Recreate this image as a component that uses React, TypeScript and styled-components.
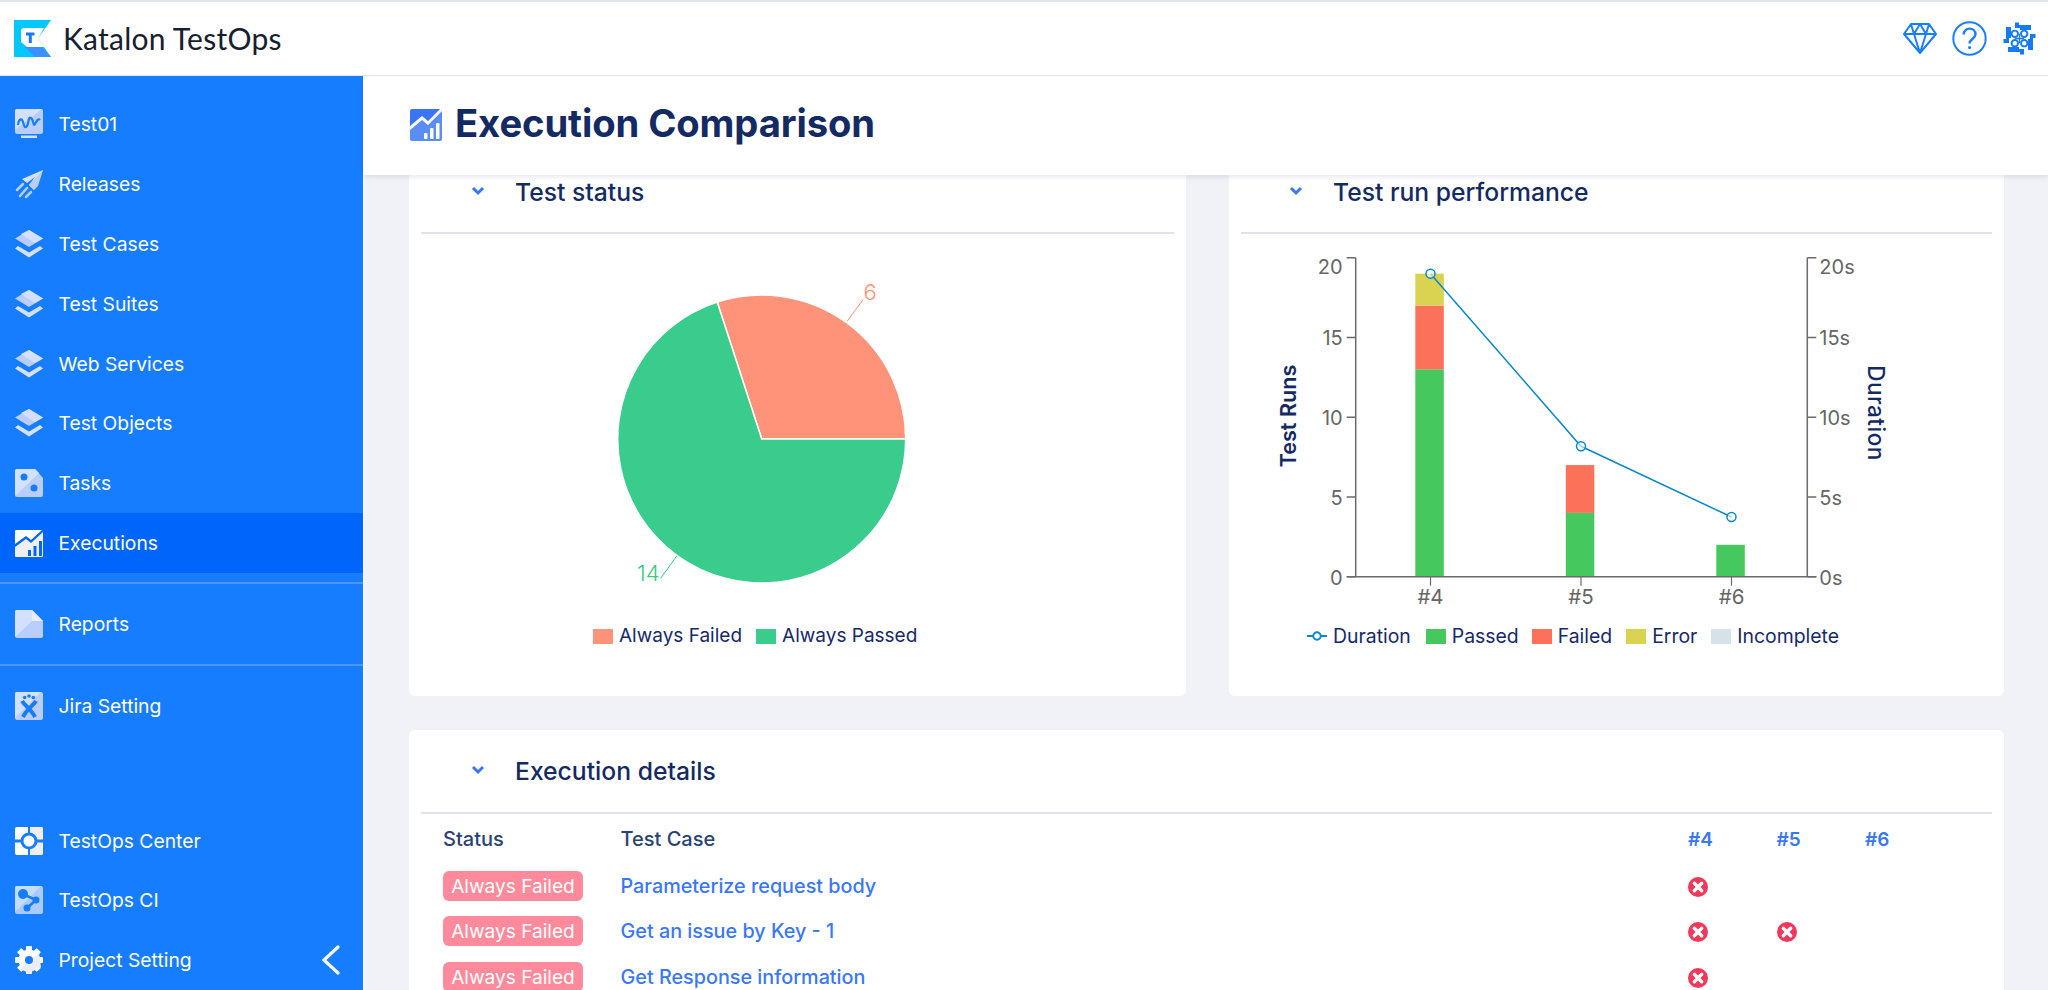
import React from "react";
import styled, { createGlobalStyle } from "styled-components";

const Global = createGlobalStyle`
  html, body, #root { margin: 0; height: 100%; }
  body { font-family: Inter, "Liberation Sans", sans-serif; overflow: hidden; background: #f0f2f7; }
  * { box-sizing: border-box; }
`;

const Page = styled.div`display: flex; flex-direction: column; height: 990px; overflow: hidden;`;
const TopBar = styled.header`
  height: 76px; flex: none; display: flex; align-items: center; justify-content: space-between;
  background: #fff; border-top: 2px solid #e1e4e8; border-bottom: 1px solid #e9e9e9; padding: 0 11px 0 14px;
`;
const Brand = styled.div`display: flex; align-items: center; gap: 12px;`;
const BrandName = styled.span`font-family: Lato, sans-serif; font-size: 30px; color: #17202e; letter-spacing: 0.25px; padding-bottom: 2px;`;
const TopIcons = styled.div`display: flex; align-items: center; gap: 15px;`;
const Body = styled.div`flex: 1; min-height: 0; display: flex;`;
const Sidebar = styled.nav`
  width: 364px; flex: none; display: flex; flex-direction: column; background: #177dff;
  border-right: 1px solid #fff; padding-top: 18.5px;
`;
const NavItem = styled.div<{ $active?: boolean }>`
  height: 59.8px; flex: none; display: flex; align-items: center; gap: 15.5px; padding-left: 15px;
  color: #fff; font-size: 19.3px; background: ${(p) => (p.$active ? "#0066fb" : "transparent")};
`;
const NavRule = styled.div`height: 2px; flex: none; margin: 9.5px 0 10px; background: #4f93ff;`;
const NavBottom = styled.div`margin-top: auto; display: flex; flex-direction: column;`;
const Collapse = styled.svg`margin-left: auto; margin-right: 22px;`;
const Main = styled.main`flex: 1; min-width: 0; display: flex; flex-direction: column;`;
const TitleBar = styled.div`
  height: 99px; flex: none; display: flex; align-items: center; gap: 13px; padding: 0 0 2px 46px; background: #fff;
  box-shadow: 0 2px 5px rgba(30, 40, 70, 0.1); position: relative; z-index: 2;
`;
const PageTitle = styled.h1`margin: 0 0 3px; font-size: 38.2px; font-weight: 700; color: #132a63; letter-spacing: -0.1px;`;
const Content = styled.div`flex: 1; min-height: 0; overflow: hidden; padding: 0 44px 0 45px; display: flex; flex-direction: column; gap: 34px;`;
const ChartRow = styled.div`display: grid; grid-template-columns: 777px 775px; gap: 43px; flex: none;`;
const Card = styled.section<{ $clipped?: boolean }>`
  background: #fff; padding: 0 12px; border-radius: ${(p) => (p.$clipped ? "0 0 6px 6px" : "6px")};
`;
const CardHead = styled.div<{ $h: number; $pb?: number; $left: number }>`
  height: ${(p) => p.$h}px; display: flex; align-items: center; gap: 30px; padding-left: ${(p) => p.$left}px;
  padding-bottom: ${(p) => p.$pb ?? 0}px; border-bottom: 2px solid #dde2ec;
`;
const CardTitle = styled.h2`margin: 0; font-size: 24.7px; font-weight: 500; color: #142a62;`;
const ChevronMark = styled.svg`flex: none; margin-bottom: 2px;`;
const ChartBody = styled.div`height: 462px;`;
const ChartSvg = styled.svg`display: block;`;
const Legend = styled.div<{ $left: number; $size: number }>`
  margin-left: ${(p) => p.$left}px; display: flex; align-items: center; font-size: ${(p) => p.$size}px; color: #15296a; line-height: 24px; white-space: nowrap;
`;
const LegendItem = styled.span<{ $gap: number }>`display: flex; align-items: center; gap: 6px; margin-right: ${(p) => p.$gap}px;`;
const Swatch = styled.i<{ $c: string }>`display: block; width: 20px; height: 15px; background: ${(p) => p.$c};`;
const Table = styled.div`padding: 11.5px 0 0 22px;`;
const Row = styled.div<{ $h: number }>`
  display: grid; grid-template-columns: 177.5px 1067.5px 88.5px 88.5px 88.5px; align-items: center; height: ${(p) => p.$h}px;
`;
const HeadRow = styled(Row)`margin-bottom: 10.5px;`;
const HeadCell = styled.span`font-size: 20px; font-weight: 500; color: #2a4274;`;
const RunCell = styled.span`font-size: 19px; font-weight: 600; color: #3a77f5;`;
const Badge = styled.span`
  display: inline-flex; align-items: center; justify-content: center; width: 140px; height: 30px; border-radius: 6px;
  background: #ff8a9c; color: #fff; font-size: 19.1px;
`;
const CaseLink = styled.span`font-size: 19.8px; font-weight: 500; color: #3a77f5;`;
const FailCell = styled.span`display: flex; padding-top: 2px;`;

const L1 = "#b9ceff";
const L2 = "#d3e0ff";
const BLUE = "#177dff";

const Layers = () => (
  <svg width="28" height="30" viewBox="0 0 28 30">
    <path d="M14 1 L28 9.5 L14 18 L0 9.5Z" fill={L1} />
    <path d="M14 1 L28 9.5 L20 14 L6 5Z" fill={L2} />
    <path d="M3 15 L14 21.5 L25 15 L28 17.5 L14 26.5 L0 17.5Z" fill={L2} transform="translate(0 2)" />
  </svg>
);
const icons: Record<string, React.ReactNode> = {
  Test01: (
    <svg width="28" height="30" viewBox="0 0 28 30">
      <rect y="0" width="28" height="25" rx="2" fill={L1} />
      <path d="M0 21 L27 0 H2 a2 2 0 0 0-2 2Z" fill={L2} />
      <path d="M3 16 C4 9 7 9 8 13 S10 20 12 17 S13 7 16 9 S18 18 20 15 S23 9 25 11" fill="none" stroke={BLUE} strokeWidth="2.2" />
      <rect x="6" y="26.5" width="16" height="2.5" fill={L2} />
    </svg>
  ),
  Releases: (
    <svg width="28" height="30" viewBox="0 0 28 30">
      <path d="M28 1 L7 10 L12 14 L20 8 L14 16 L19 21Z" fill={L2} />
      <path d="M28 1 L14 16 L19 21 L23 17Z" fill={L1} />
      <path d="M8 15 L2 21 M12 19 L5 27 M16 23 L11 28" stroke={L1} strokeWidth="2.5" strokeLinecap="round" />
    </svg>
  ),
  "Test Cases": <Layers />,
  "Test Suites": <Layers />,
  "Web Services": <Layers />,
  "Test Objects": <Layers />,
  Tasks: (
    <svg width="28" height="30" viewBox="0 0 28 30">
      <path d="M2 1 H20 L28 10 V27 a2 2 0 0 1-2 2 H2 a2 2 0 0 1-2-2 V3 a2 2 0 0 1 2-2Z" fill={L1} />
      <path d="M2 1 H20 L24 5 L0 28 V3 a2 2 0 0 1 2-2Z" fill={L2} />
      <circle cx="9" cy="9" r="3.5" fill={BLUE} />
      <circle cx="19" cy="20" r="3.5" fill={BLUE} />
    </svg>
  ),
  Executions: (
    <svg width="28" height="30" viewBox="0 0 28 30">
      <path d="M0 3 a1 1 0 0 1 1-1 H27 L16 12 L11 8 L0 16Z" fill="#fff" />
      <path d="M28 3 V28 a1 1 0 0 1-1 1 H1 a1 1 0 0 1-1-1 V19 L11 11 L16 15 L28 4Z" fill="#efeff2" />
      <rect x="13" y="22" width="3" height="6" fill="#0066fb" />
      <rect x="18.5" y="18" width="3" height="10" fill="#0066fb" />
      <rect x="24" y="13" width="3" height="15" fill="#0066fb" />
    </svg>
  ),
  Reports: (
    <svg width="28" height="30" viewBox="0 0 28 30">
      <path d="M2 1 H17 L28 12 V27 a2 2 0 0 1-2 2 H2 a2 2 0 0 1-2-2 V3 a2 2 0 0 1 2-2Z" fill={L1} />
      <path d="M2 1 H17 V12 L0 28 V3 a2 2 0 0 1 2-2Z" fill={L2} />
      <path d="M17 1 L28 12 H17Z" fill="#e8eeff" />
    </svg>
  ),
  "Jira Setting": (
    <svg width="28" height="30" viewBox="0 0 28 30">
      <rect y="1" width="28" height="28" rx="2" fill={L1} />
      <path d="M0 27 V3 a2 2 0 0 1 2-2 H26Z" fill={L2} />
      <circle cx="9.7" cy="6.5" r="1.8" fill={BLUE} />
      <circle cx="14" cy="5" r="1.8" fill={BLUE} />
      <circle cx="18.3" cy="6.5" r="1.8" fill={BLUE} />
      <path d="M7 10 C10 15 16 18 20 26 M21 10 C18 15 12 18 8 26" fill="none" stroke={BLUE} strokeWidth="4" />
    </svg>
  ),
  "TestOps Center": (
    <svg width="28" height="30" viewBox="0 0 28 30">
      <rect y="1" width="28" height="28" rx="2" fill="#fff" />
      <path d="M14 1 H26 a2 2 0 0 1 2 2 V27 a2 2 0 0 1-2 2 H14Z" fill="#efeff2" />
      <path d="M0 13.5 H28 V16.5 H0Z M13 1 H15 V29 H13Z" fill={BLUE} />
      <circle cx="14" cy="15" r="8.5" fill={BLUE} />
      <circle cx="14" cy="15" r="5.5" fill="#fff" />
    </svg>
  ),
  "TestOps CI": (
    <svg width="28" height="30" viewBox="0 0 28 30">
      <rect y="1" width="28" height="28" rx="2" fill="#a9cbff" />
      <path d="M0 27 V3 a2 2 0 0 1 2-2 H26Z" fill="#c4dcff" />
      <path d="M8 9 L21 15 L12 23" stroke={BLUE} strokeWidth="2.5" fill="none" />
      <circle cx="8" cy="9" r="5" fill={BLUE} />
      <circle cx="21" cy="15" r="3.5" fill={BLUE} />
      <circle cx="12" cy="23" r="3.5" fill={BLUE} />
    </svg>
  ),
  "Project Setting": (
    <svg width="28" height="30" viewBox="0 0 28 30">
      <g fill="#fff">
        <circle cx="14" cy="15" r="10.5" />
        {[0, 45, 90, 135, 180, 225, 270, 315].map((a) => (
          <rect key={a} x="11" y="1" width="6" height="6" rx="1" transform={`rotate(${a} 14 15)`} />
        ))}
      </g>
      <path d="M24 8 L5 24 L14 28 L26 22Z" fill="#eceef3" />
      <circle cx="14" cy="15" r="4" fill={BLUE} />
    </svg>
  ),
};

const Nav = ({ label, active, children }: { label: string; active?: boolean; children?: React.ReactNode }) => (
  <NavItem $active={active}>
    {icons[label]}
    <span>{label}</span>
    {children}
  </NavItem>
);

const Chevron = () => (
  <ChevronMark width="14" height="10" viewBox="0 0 14 10">
    <path d="M2 2 L7 7 L12 2" fill="none" stroke="#3a77f5" strokeWidth="3" />
  </ChevronMark>
);

const FailIcon = () => (
  <svg width="20" height="20" viewBox="0 0 20 20">
    <circle cx="10" cy="10" r="10" fill="#f2385a" />
    <path d="M6.3 6.3 L13.7 13.7 M13.7 6.3 L6.3 13.7" stroke="#fff" strokeWidth="3.4" strokeLinecap="round" />
  </svg>
);

/* pie: drawn in card-body coordinates (body origin = 421, 234) */
const PieChart = () => {
  const cx = 340.7, cy = 205, r = 144;
  const ex = cx + r * Math.cos((108 * Math.PI) / 180);
  const ey = cy - r * Math.sin((108 * Math.PI) / 180);
  return (
    <ChartSvg width="753" height="390" viewBox="0 0 753 390">
      <path d={`M${cx} ${cy} L${cx + r} ${cy} A${r} ${r} 0 0 0 ${ex} ${ey}Z`} fill="#ff9379" stroke="#fff" strokeWidth="1.5" />
      <path d={`M${cx} ${cy} L${ex} ${ey} A${r} ${r} 0 1 0 ${cx + r} ${cy}Z`} fill="#39cc8c" stroke="#fff" strokeWidth="1.5" />
      <path d="M426.3 87 L442.3 65.3" stroke="#ff8f74" fill="none" />
      <text x="442.5" y="66" fill="#ff8f74" fontSize="22" fontWeight="300">6</text>
      <path d="M255.7 322 L239.7 344.3" stroke="#36cc85" fill="none" />
      <text x="238.5" y="347" textAnchor="end" fill="#36cc85" fontSize="22" fontWeight="300">14</text>
    </ChartSvg>
  );
};

/* combo chart: body origin = 1241, 234 */
const ComboChart = () => {
  const ox = 1241, oy = 234;
  const yAt = (v: number) => 576.7 - oy - v * 15.95;
  const L = 1355.7 - ox, R = 1807.3 - ox;
  const centers = [1430.5 - ox, 1581 - ox, 1731.5 - ox];
  const bars = [
    [{ f: 0, t: 13, c: "#45c95f" }, { f: 13, t: 17, c: "#fb7159" }, { f: 17, t: 19, c: "#dad352" }],
    [{ f: 0, t: 4, c: "#45c95f" }, { f: 4, t: 7, c: "#fb7159" }],
    [{ f: 0, t: 2, c: "#45c95f" }],
  ];
  const pts = [[centers[0], yAt(19)], [centers[1], 446.3 - oy], [centers[2], 517 - oy]];
  const axis = "#6b6b6b";
  return (
    <ChartSvg width="751" height="390" viewBox="0 0 751 390">
      {bars.map((b, i) =>
        b.map((s) => (
          <rect key={`${i}-${s.f}`} x={centers[i] - 15.2} y={yAt(s.t)} width="28.5" height={(s.t - s.f) * 15.95} fill={s.c} />
        ))
      )}
      <path d={`M${L} ${yAt(20)} V${yAt(0)} M${R} ${yAt(20)} V${yAt(0)} M${L - 9} ${yAt(0)} H${R + 9}`} stroke={axis} strokeWidth="1.5" fill="none" />
      {[0, 5, 10, 15, 20].map((v) => {
        const labelY = yAt(v) + (v === 20 ? 16 : 8);
        return (
          <g key={v}>
            <path d={`M${L - 9} ${yAt(v)} H${L} M${R} ${yAt(v)} H${R + 9}`} stroke={axis} strokeWidth="1.5" />
            <text x={L - 13} y={labelY} textAnchor="end" fontSize="20" fill="#666">{v}</text>
            <text x={R + 12} y={labelY} fontSize="20" fill="#666">{v}s</text>
          </g>
        );
      })}
      {centers.map((c, i) => (
        <g key={c}>
          <path d={`M${c} ${yAt(0)} v9`} stroke={axis} strokeWidth="1.2" />
          <text x={c} y={yAt(0) + 27} textAnchor="middle" fontSize="20.5" fill="#666">#{4 + i}</text>
        </g>
      ))}
      <polyline points={pts.map((p) => p.join(",")).join(" ")} fill="none" stroke="#0a88c8" strokeWidth="1.5" />
      {pts.map((p) => (
        <circle key={p[0]} cx={p[0]} cy={p[1]} r="4.5" fill="#fff" fillOpacity="0.6" stroke="#0a88c8" strokeWidth="1.5" />
      ))}
      <text transform={`translate(${1296 - ox} 182) rotate(-90)`} textAnchor="middle" fontSize="21.6" fontWeight="600" fill="#142a62">Test Runs</text>
      <text transform={`translate(${1868 - ox} 179) rotate(90)`} textAnchor="middle" fontSize="22.5" fontWeight="500" letterSpacing="0.5" fill="#142a62">Duration</text>
    </ChartSvg>
  );
};

const DurationKey = () => (
  <svg width="20" height="12" viewBox="0 0 20 12">
    <path d="M0 6 H20" stroke="#0a88c8" strokeWidth="2" />
    <circle cx="10" cy="6" r="3.7" fill="#fff" stroke="#0a88c8" strokeWidth="2" />
  </svg>
);

const Logo = () => (
  <svg width="37" height="37" viewBox="0 0 37 37">
    <path d="M0 0 H37 L24 18.5 L37 37 H0Z" fill="#00c8ff" />
    <path d="M11 27 H28 L37 37 H21Z" fill="#3d8eff" />
    <path d="M7 11 a3 3 0 0 1 3-3 H30 L24 18.5 L30 27 H13 L7 22Z" fill="#fff" />
    <path d="M12 12.5 H20.5 V15.5 H17.8 V23 H14.8 V15.5 H12Z" fill="#1677ff" />
  </svg>
);

const UserMark = () => (
  <svg width="35" height="35" viewBox="0 0 35 35">
    <g fill="#157bf0">
      {[0, 90, 180, 270].map((a) => (
        <path key={a} transform={`rotate(${a} 17.5 17.5)`} d="M13 1.5 H17 V4 H29 V9 H18 V7 H13Z" />
      ))}
    </g>
    <g fill="#fff" stroke="#157bf0" strokeWidth="1.9">
      <path d="M12.8 17.5 H22.2 M17.5 12.8 V22.2" fill="none" strokeWidth="1.3" />
      {[[12.8, 12.8], [22.2, 12.8], [12.8, 22.2], [22.2, 22.2]].map(([x, y]) => (
        <circle key={`${x}${y}`} cx={x} cy={y} r="3.2" />
      ))}
    </g>
  </svg>
);

const rows = [
  { name: "Parameterize request body", runs: [true, false, false] },
  { name: "Get an issue by Key - 1", runs: [true, true, false] },
  { name: "Get Response information", runs: [true, false, false] },
];

export default function App() {
  return (
    <Page>
      <Global />
      <TopBar>
        <Brand>
          <Logo />
          <BrandName>Katalon TestOps</BrandName>
        </Brand>
        <TopIcons>
          <svg width="34" height="33" viewBox="0 0 34 33" fill="none" stroke="#1a7fff" strokeWidth="2" strokeLinejoin="round">
            <path d="M8 2 H26 L33 12 L17 31 L1 12Z M1 12 H33 M8 2 L11 12 L17 31 L23 12 L26 2 M11 12 L17 2 L23 12" />
          </svg>
          <svg width="35" height="35" viewBox="0 0 35 35" fill="none" stroke="#1a7fff">
            <circle cx="17.5" cy="17.5" r="16.2" strokeWidth="2" />
            <path d="M11.7 13.5 c0-8 11.8-7.6 11.8-.2 c0 4.4-5.9 4.6-5.9 9.2" strokeWidth="2.4" />
            <circle cx="17.6" cy="26.5" r="1.6" fill="#1a7fff" stroke="none" />
          </svg>
          <UserMark />
        </TopIcons>
      </TopBar>
      <Body>
        <Sidebar>
          {["Test01", "Releases", "Test Cases", "Test Suites", "Web Services", "Test Objects", "Tasks"].map((l) => (
            <Nav key={l} label={l} />
          ))}
          <Nav label="Executions" active />
          <NavRule />
          <Nav label="Reports" />
          <NavRule />
          <Nav label="Jira Setting" />
          <NavBottom>
            <Nav label="TestOps Center" />
            <Nav label="TestOps CI" />
            <Nav label="Project Setting">
              <Collapse width="20" height="30" viewBox="0 0 20 30">
                <path d="M17 2 L3 15 L17 28" fill="none" stroke="#fff" strokeWidth="3.2" strokeLinecap="round" />
              </Collapse>
            </Nav>
          </NavBottom>
        </Sidebar>
        <Main>
          <TitleBar>
            <svg width="32" height="32" viewBox="0 0 32 32">
              <path d="M0 2 a2 2 0 0 1 2-2 H30 L18 12 L12 7 L0 17Z" fill="#3a75f5" />
              <path d="M32 2 V30 a2 2 0 0 1-2 2 H2 a2 2 0 0 1-2-2 V21 L12 11 L18 16Z" fill="#5b8ef5" />
              <rect x="14" y="24" width="3.5" height="6" rx="1" fill="#fff" />
              <rect x="20" y="19" width="3.5" height="11" rx="1" fill="#fff" />
              <rect x="26" y="14" width="3.5" height="16" rx="1" fill="#fff" />
            </svg>
            <PageTitle>Execution Comparison</PageTitle>
          </TitleBar>
          <Content>
            <ChartRow>
              <Card $clipped>
                <CardHead $h={59} $pb={24} $left={50}>
                  <Chevron />
                  <CardTitle>Test status</CardTitle>
                </CardHead>
                <ChartBody>
                  <PieChart />
                  <Legend $left={172} $size={19}>
                    <LegendItem $gap={14}><Swatch $c="#ff9379" />Always Failed</LegendItem>
                    <LegendItem $gap={0}><Swatch $c="#39cc8c" />Always Passed</LegendItem>
                  </Legend>
                </ChartBody>
              </Card>
              <Card $clipped>
                <CardHead $h={59} $pb={24} $left={48}>
                  <Chevron />
                  <CardTitle>Test run performance</CardTitle>
                </CardHead>
                <ChartBody>
                  <ComboChart />
                  <Legend $left={66} $size={19.4}>
                    <LegendItem $gap={15}><DurationKey />Duration</LegendItem>
                    <LegendItem $gap={13}><Swatch $c="#45c95f" />Passed</LegendItem>
                    <LegendItem $gap={14}><Swatch $c="#fb7159" />Failed</LegendItem>
                    <LegendItem $gap={14}><Swatch $c="#dad352" />Error</LegendItem>
                    <LegendItem $gap={0}><Swatch $c="#d6e2e9" />Incomplete</LegendItem>
                  </Legend>
                </ChartBody>
              </Card>
            </ChartRow>
            <Card>
              <CardHead $h={84} $left={50}>
                <Chevron />
                <CardTitle>Execution details</CardTitle>
              </CardHead>
              <Table>
                <HeadRow $h={27}>
                  <HeadCell>Status</HeadCell>
                  <HeadCell>Test Case</HeadCell>
                  <RunCell>#4</RunCell>
                  <RunCell>#5</RunCell>
                  <RunCell>#6</RunCell>
                </HeadRow>
                {rows.map((r) => (
                  <Row key={r.name} $h={45.6}>
                    <span><Badge>Always Failed</Badge></span>
                    <CaseLink>{r.name}</CaseLink>
                    {r.runs.map((f, i) => (
                      <FailCell key={i}>{f && <FailIcon />}</FailCell>
                    ))}
                  </Row>
                ))}
              </Table>
            </Card>
          </Content>
        </Main>
      </Body>
    </Page>
  );
}
